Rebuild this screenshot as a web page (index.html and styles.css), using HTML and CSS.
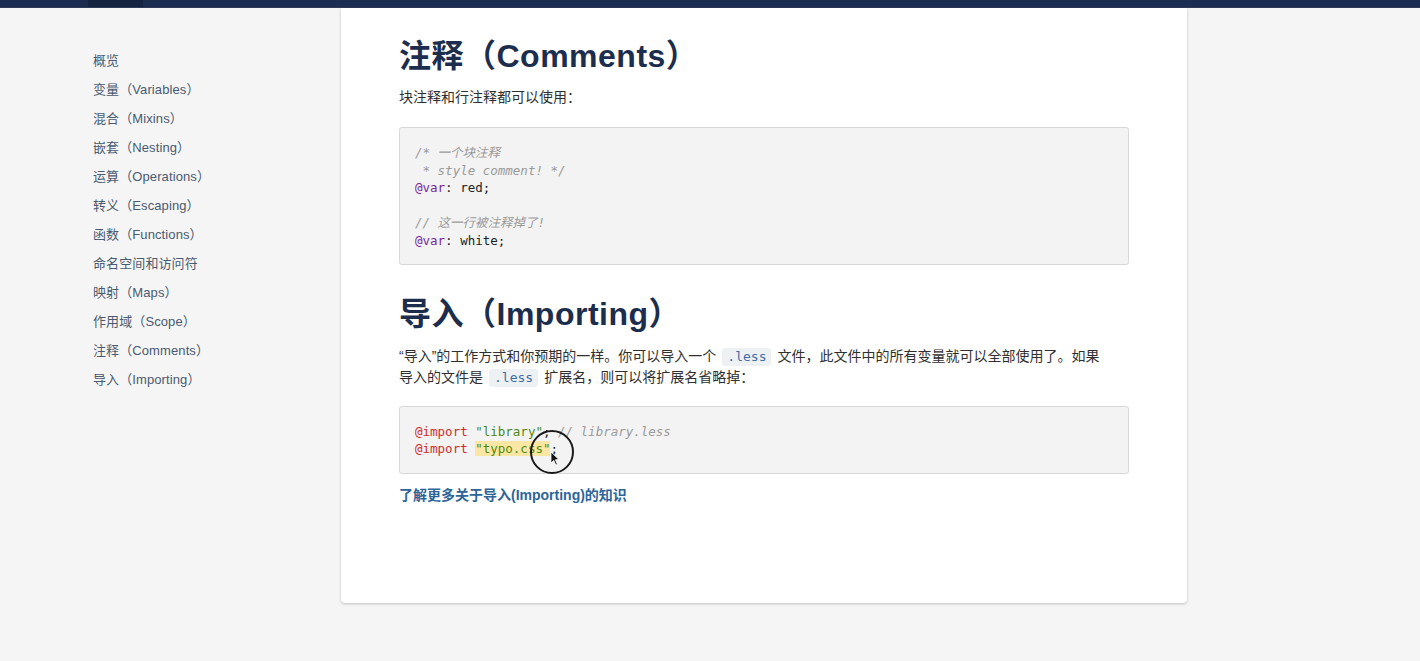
FILE: index.html
```html
<!DOCTYPE html>
<html lang="zh">
<head>
<meta charset="utf-8">
<title>Less 文档</title>
<link rel="stylesheet" href="styles.css">
</head>
<body>
<div class="topbar"><span class="topbar-active"></span></div>
<div class="layout">
  <nav class="sidebar">
    <a class="nav-item">概览</a>
    <a class="nav-item">变量（Variables）</a>
    <a class="nav-item">混合（Mixins）</a>
    <a class="nav-item">嵌套（Nesting）</a>
    <a class="nav-item">运算（Operations）</a>
    <a class="nav-item">转义（Escaping）</a>
    <a class="nav-item">函数（Functions）</a>
    <a class="nav-item">命名空间和访问符</a>
    <a class="nav-item">映射（Maps）</a>
    <a class="nav-item">作用域（Scope）</a>
    <a class="nav-item">注释（Comments）</a>
    <a class="nav-item">导入（Importing）</a>
  </nav>
  <main class="card">
    <h2 class="title">注释（Comments）</h2>
    <p class="text">块注释和行注释都可以使用：</p>
    <pre class="code code-1"><span class="c">/* 一个块注释
 * style comment! */</span>
<span class="v">@var</span>: red;

<span class="c">// 这一行被注释掉了!</span>
<span class="v">@var</span>: white;</pre>

    <h2 class="title title-2">导入（Importing）</h2>
    <p class="text text-narrow">“导入”的工作方式和你预期的一样。你可以导入一个<code class="inline">.less</code>文件，此文件中的所有变量就可以全部使用了。如果导入的文件是<code class="inline">.less</code>扩展名，则可以将扩展名省略掉：</p>
    <div class="code-wrap">
      <pre class="code code-2"><span class="k">@import</span> <span class="s">"library"</span>; <span class="c">// library.less</span>
<span class="k">@import</span> <span class="s hl">"typo.css"</span>;</pre>
      <div class="cursor-ring">
        <svg class="cursor-arrow" width="10" height="15" viewBox="0 0 10 15"><path d="M1 1 L1 12 L3.8 9.4 L5.8 14 L7.4 13.3 L5.4 8.8 L9 8.6 Z" fill="#111" stroke="#fff" stroke-width="0.8"/></svg>
      </div>
    </div>
    <a class="more">了解更多关于导入(Importing)的知识</a>
  </main>
</div>
</body>
</html>
```

FILE: styles.css
```css
* { box-sizing: border-box; }
html, body { margin: 0; padding: 0; }
body {
  background: #f5f5f5;
  font-family: "Liberation Sans", "Noto Sans CJK SC", sans-serif;
  color: #333;
  height: 661px;
  overflow: hidden;
}
.topbar {
  height: 8px;
  background: #1b2e52;
  padding-left: 88px;
  border-bottom: 1px solid #2a3a58;
}
.topbar-active {
  display: block;
  width: 55px;
  height: 7px;
  background: #142340;
}
.layout {
  display: flex;
  align-items: flex-start;
}
.sidebar {
  width: 341px;
  padding: 38px 0 0 93px;
  display: flex;
  flex-direction: column;
}
.nav-item {
  font-size: 13px;
  line-height: 29px;
  height: 29px;
  color: #4a5a71;
  white-space: nowrap;
  letter-spacing: 0.1px;
  font-family: "Liberation Sans", "Noto Sans CJK SC", sans-serif;
}
.card {
  width: 846px;
  background: #fff;
  padding: 28px 58px 97px;
  box-shadow: 0 1px 3px rgba(0,0,0,0.22);
  border-radius: 0 0 4px 4px;
}
.title {
  margin: 0;
  font-size: 32px;
  line-height: 40px;
  font-weight: 700;
  color: #1c2d4d;
  letter-spacing: 0.5px;
  font-family: "Liberation Sans", "Noto Sans CJK SC", sans-serif;
}
.title-2 { margin-top: 29px; }
.text {
  margin: 11px 0 0;
  font-size: 14px;
  line-height: 21px;
  color: #2f2f2f;
  font-family: "Liberation Sans", "Noto Sans CJK SC", sans-serif;
}
.title-2 + .text { margin-top: 12px; }
.text-narrow { max-width: 706px; }
.inline {
  display: inline-block;
  font-family: "DejaVu Sans Mono", monospace;
  font-size: 13px;
  line-height: 18px;
  color: #3d6fa5;
  background: #eef1f4;
  padding: 0 5px;
  margin: 0 6px;
  border-radius: 3px;
}
.code {
  margin: 18px 0 0;
  padding: 16px 15px 14px;
  background: #f3f3f3;
  border: 1px solid #d8d8d8;
  border-radius: 3px;
  font-family: "DejaVu Sans Mono", "Noto Sans CJK SC", monospace;
  font-size: 12.5px;
  line-height: 17.6px;
  color: #222;
}
.code-1 { margin-top: 19px; }
.code-2 { padding-bottom: 15px; }
.c { color: #9a9a9a; font-style: italic; }
.v { color: #7a2a9e; }
.k { color: #d12c2c; }
.s { color: #4f8a10; }
.hl { background: #fbe7a3; }
.code-wrap { position: relative; }
.cursor-ring {
  position: absolute;
  left: 131px;
  top: 24px;
  width: 44px;
  height: 44px;
  border: 2px solid #1a1a1a;
  border-radius: 50%;
}
.cursor-arrow {
  position: absolute;
  left: 18px;
  top: 19px;
}
.more {
  display: block;
  margin-top: 11px;
  font-size: 14px;
  line-height: 21px;
  font-weight: 700;
  color: #2d6599;
  font-family: "Liberation Sans", "Noto Sans CJK SC", sans-serif;
}
```
